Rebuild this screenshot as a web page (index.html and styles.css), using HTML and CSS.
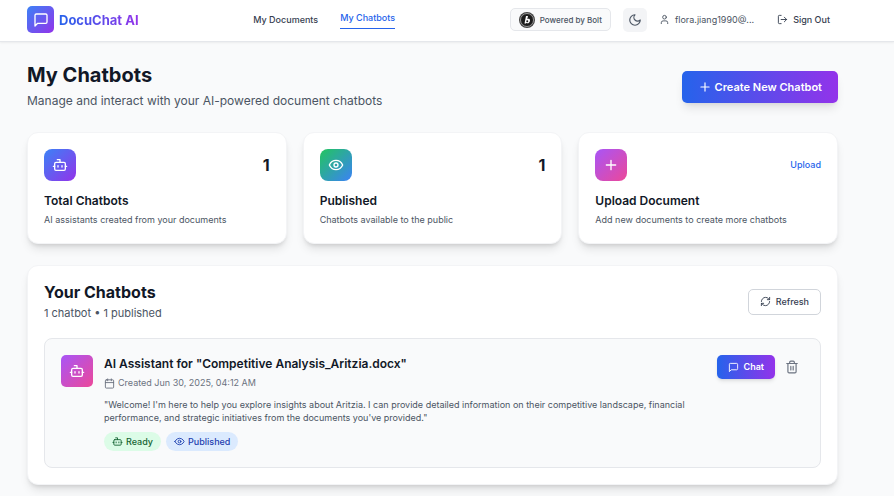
FILE: index.html
```html
<!DOCTYPE html>
<html lang="en">
<head>
<meta charset="utf-8">
<meta name="viewport" content="width=device-width, initial-scale=1">
<title>DocuChat AI</title>
<link rel="stylesheet" href="styles.css">
</head>
<body>
<svg class="sprite" aria-hidden="true">
  <symbol id="message" viewBox="0 0 24 24"><path d="M21 15a2 2 0 0 1-2 2H7l-4 4V5a2 2 0 0 1 2-2h14a2 2 0 0 1 2 2z"/></symbol>
  <symbol id="bot" viewBox="0 0 24 24"><path d="M12 8V4H8"/><rect width="16" height="12" x="4" y="8" rx="2"/><path d="M2 14h2M20 14h2M15 13v2M9 13v2"/></symbol>
  <symbol id="eye" viewBox="0 0 24 24"><path d="M2 12s3-7 10-7 10 7 10 7-3 7-10 7-10-7-10-7Z"/><circle cx="12" cy="12" r="3"/></symbol>
  <symbol id="plus" viewBox="0 0 24 24"><path d="M5 12h14M12 5v14"/></symbol>
  <symbol id="moon" viewBox="0 0 24 24"><path d="M12 3a6 6 0 0 0 9 9 9 9 0 1 1-9-9Z"/></symbol>
  <symbol id="user" viewBox="0 0 24 24"><path d="M19 21v-2a4 4 0 0 0-4-4H9a4 4 0 0 0-4 4v2"/><circle cx="12" cy="7" r="4"/></symbol>
  <symbol id="logout" viewBox="0 0 24 24"><path d="M9 21H5a2 2 0 0 1-2-2V5a2 2 0 0 1 2-2h4M16 17l5-5-5-5M21 12H9"/></symbol>
  <symbol id="refresh" viewBox="0 0 24 24"><path d="M3 12a9 9 0 0 1 9-9 9.75 9.75 0 0 1 6.74 2.74L21 8M21 3v5h-5M21 12a9 9 0 0 1-9 9 9.75 9.75 0 0 1-6.74-2.74L3 16M8 16H3v5"/></symbol>
  <symbol id="calendar" viewBox="0 0 24 24"><rect width="18" height="18" x="3" y="4" rx="2"/><path d="M16 2v4M8 2v4M3 10h18"/></symbol>
  <symbol id="trash" viewBox="0 0 24 24"><path d="M3 6h18M19 6v14a2 2 0 0 1-2 2H7a2 2 0 0 1-2-2V6M8 6V4a2 2 0 0 1 2-2h4a2 2 0 0 1 2 2v2M10 11v6M14 11v6"/></symbol>
</svg>

<header class="header">
  <div class="container header-row">
    <a class="brand" href="#">
      <span class="tile tile-brand"><svg class="icon icon-lg"><use href="#message"/></svg></span>
      <span class="brand-name">DocuChat AI</span>
    </a>
    <nav class="nav">
      <a class="nav-link" href="#">My Documents</a>
      <a class="nav-link active" href="#" aria-current="page">My Chatbots</a>
    </nav>
    <div class="account">
      <a class="bolt" href="#">
        <svg class="bolt-logo" viewBox="0 0 32 32" aria-hidden="true">
          <circle cx="16" cy="16" r="16" fill="#444"/>
          <circle cx="16" cy="16" r="13" fill="#1c1c1c" stroke="#999" stroke-width="2"/>
          <path d="M14 8l-3 15h3l.5-1.500c3 3 7 0 7.500-4 .500-4-3-5-5.500-3L18 8z" fill="#fff"/>
          <circle cx="16.500" cy="18.500" r="2" fill="#1c1c1c"/>
        </svg>
        <span>Powered by Bolt</span>
      </a>
      <button class="theme" type="button" aria-label="Toggle theme"><svg class="icon icon-md"><use href="#moon"/></svg></button>
      <span class="user"><svg class="icon icon-sm"><use href="#user"/></svg><span>flora.jiang1990@...</span></span>
      <button class="signout" type="button"><svg class="icon icon-sm"><use href="#logout"/></svg><span>Sign Out</span></button>
    </div>
  </div>
</header>

<main class="container main">
  <div class="split">
    <div>
      <h1 class="page-title">My Chatbots</h1>
      <p class="page-sub">Manage and interact with your AI-powered document chatbots</p>
    </div>
    <button class="create" type="button"><svg class="icon icon-md"><use href="#plus"/></svg><span>Create New Chatbot</span></button>
  </div>

  <div class="stats">
    <section class="card stat">
      <div class="split"><span class="tile tile-blue"><svg class="icon icon-lg"><use href="#bot"/></svg></span><span class="count">1</span></div>
      <h3 class="item-title">Total Chatbots</h3>
      <p class="stat-text">AI assistants created from your documents</p>
    </section>
    <section class="card stat">
      <div class="split"><span class="tile tile-green"><svg class="icon icon-lg"><use href="#eye"/></svg></span><span class="count">1</span></div>
      <h3 class="item-title">Published</h3>
      <p class="stat-text">Chatbots available to the public</p>
    </section>
    <section class="card stat">
      <div class="split"><span class="tile tile-pink"><svg class="icon icon-lg"><use href="#plus"/></svg></span><a class="upload" href="#">Upload</a></div>
      <h3 class="item-title">Upload Document</h3>
      <p class="stat-text">Add new documents to create more chatbots</p>
    </section>
  </div>

  <section class="card list">
    <div class="split">
      <div>
        <h2 class="list-title">Your Chatbots</h2>
        <p class="list-sub">1 chatbot • 1 published</p>
      </div>
      <button class="refresh" type="button"><svg class="icon icon-sm"><use href="#refresh"/></svg><span>Refresh</span></button>
    </div>
    <article class="bot">
      <span class="tile tile-pink"><svg class="icon icon-lg"><use href="#bot"/></svg></span>
      <div class="bot-body">
        <h3 class="item-title">AI Assistant for "Competitive Analysis_Aritzia.docx"</h3>
        <p class="created"><svg class="icon icon-sm"><use href="#calendar"/></svg><span>Created Jun 30, 2025, 04:12 AM</span></p>
        <p class="welcome">"Welcome! I'm here to help you explore insights about Aritzia. I can provide detailed information on their competitive landscape, financial performance, and strategic initiatives from the documents you've provided."</p>
        <div class="pills">
          <span class="pill ready"><svg class="icon icon-sm"><use href="#bot"/></svg><span>Ready</span></span>
          <span class="pill published"><svg class="icon icon-sm"><use href="#eye"/></svg><span>Published</span></span>
        </div>
      </div>
      <div class="actions">
        <button class="chat" type="button"><svg class="icon icon-sm"><use href="#message"/></svg><span>Chat</span></button>
        <button class="delete" type="button" aria-label="Delete chatbot"><svg class="icon icon-md"><use href="#trash"/></svg></button>
      </div>
    </article>
  </section>
</main>
</body>
</html>
```
FILE: styles.css
```css
*, *::before, *::after { box-sizing: border-box; }
body {
  margin: 0;
  background: #f9fafb;
  color: #111827;
  font-family: Inter, "Liberation Sans", sans-serif;
  font-size: 9px;
  line-height: 14px;
}
h1, h2, h3, p { margin: 0; }
a { color: inherit; text-decoration: none; }
button { font: inherit; color: inherit; border: 0; background: none; padding: 0; cursor: pointer; }
.sprite { position: absolute; width: 0; height: 0; }
.icon { flex: none; fill: none; stroke: currentColor; stroke-width: 2; stroke-linecap: round; stroke-linejoin: round; }
.icon-sm { width: 11px; height: 11px; }
.icon-md { width: 14px; height: 14px; }
.icon-lg { width: 16px; height: 16px; }
.container { padding: 0 56px 0 27px; }
.split { display: flex; align-items: center; justify-content: space-between; }

.header { background: #fff; border-bottom: 1px solid #e5e7eb; box-shadow: 0 1px 2px rgba(0, 0, 0, .06); }
.header-row { display: flex; align-items: center; justify-content: space-between; height: 41px; padding-bottom: 2px; }
.brand { display: flex; align-items: center; gap: 5px; }
.brand-name {
  font-size: 13px; line-height: 18px; font-weight: 700;
  background: linear-gradient(90deg, #2563eb, #9333ea);
  -webkit-background-clip: text; background-clip: text; color: transparent;
}
.tile { display: flex; flex: none; align-items: center; justify-content: center; width: 32px; height: 32px; border-radius: 8px; color: #fff; }
.tile-brand { width: 27px; height: 27px; border-radius: 5px; background: linear-gradient(135deg, #3b82f6, #9333ea); }
.tile-blue { background: linear-gradient(135deg, #3b82f6, #9333ea); }
.tile-green { background: linear-gradient(135deg, #22c55e, #3b82f6); }
.tile-pink { background: linear-gradient(135deg, #a855f7, #ec4899); }
.nav { display: flex; align-items: center; gap: 22px; color: #374151; font-weight: 500; }
.nav-link.active { color: #2563eb; border-bottom: 1px solid #2563eb; padding-bottom: 3px; }
.account { display: flex; align-items: center; gap: 12px; color: #4b5563; }
.bolt { display: flex; align-items: center; gap: 5px; height: 23px; padding: 0 8px; border: 1px solid #e5e7eb; border-radius: 5px; background: #f9fafb; font-size: 8px; font-weight: 500; }
.bolt-logo { width: 16px; height: 16px; }
.theme { display: flex; align-items: center; justify-content: center; width: 24px; height: 24px; border-radius: 5px; background: #f3f4f6; }
.user, .signout { display: flex; align-items: center; gap: 5px; }
.signout { padding: 0 8px 0 11px; color: #374151; font-weight: 500; }

.main { padding-top: 21px; padding-bottom: 11px; }
.page-title { font-size: 20px; line-height: 24px; font-weight: 700; }
.page-sub { margin-top: 5px; font-size: 12px; line-height: 18px; color: #4b5563; }
.create, .chat { display: flex; align-items: center; color: #fff; background: linear-gradient(90deg, #2563eb, #9333ea); border-radius: 5px; font-weight: 600; }
.create { gap: 3px; height: 32px; padding: 0 16px; font-size: 11px; box-shadow: 0 7px 10px -2px rgba(0, 0, 0, .1), 0 3px 4px -3px rgba(0, 0, 0, .1); }
.card { background: #fff; border: 1px solid #f3f4f6; border-radius: 11px; box-shadow: 0 7px 10px -2px rgba(0, 0, 0, .1), 0 3px 4px -2px rgba(0, 0, 0, .12); }
.stats { display: grid; grid-template-columns: repeat(3, 1fr); gap: 16px; margin-top: 22px; }
.stat { padding: 16px; }
.count { font-size: 16px; line-height: 20px; font-weight: 700; }
.upload { color: #2563eb; font-weight: 500; }
.item-title { font-size: 12px; line-height: 18px; font-weight: 600; }
.stat .item-title { margin-top: 11px; }
.stat-text { margin-top: 3px; color: #4b5563; }

.list { margin-top: 21px; padding: 16px; }
.list-title { font-size: 16px; line-height: 20px; font-weight: 700; }
.list-sub { margin-top: 3px; font-size: 11px; line-height: 16px; color: #4b5563; }
.refresh { display: flex; align-items: center; gap: 5px; height: 26px; padding: 0 11px; border: 1px solid #d1d5db; border-radius: 5px; background: #fff; color: #374151; font-weight: 500; }
.bot { display: flex; gap: 11px; margin-top: 17px; padding: 16px; border: 1px solid #e5e7eb; border-radius: 8px; background: #f9fafb; }
.bot .tile { border-radius: 5px; }
.bot-body { flex: 1; min-width: 0; }
.created { display: flex; align-items: center; gap: 3px; margin-top: 3px; color: #6b7280; }
.welcome { margin-top: 8px; line-height: 13px; color: #4b5563; }
.pills { display: flex; gap: 5px; margin-top: 8px; }
.pill { display: flex; align-items: center; gap: 3px; height: 19px; padding: 0 8px; border-radius: 10px; font-weight: 500; }
.ready { background: #dcfce7; color: #166534; }
.published { background: #dbeafe; color: #1e40af; }
.actions { display: flex; align-items: flex-start; gap: 5px; }
.chat { gap: 5px; height: 24px; padding: 0 11px; box-shadow: 0 3px 4px -1px rgba(0, 0, 0, .1), 0 1px 3px -1px rgba(0, 0, 0, .1); }
.delete { display: flex; padding: 5px; color: #6b7280; }
```
